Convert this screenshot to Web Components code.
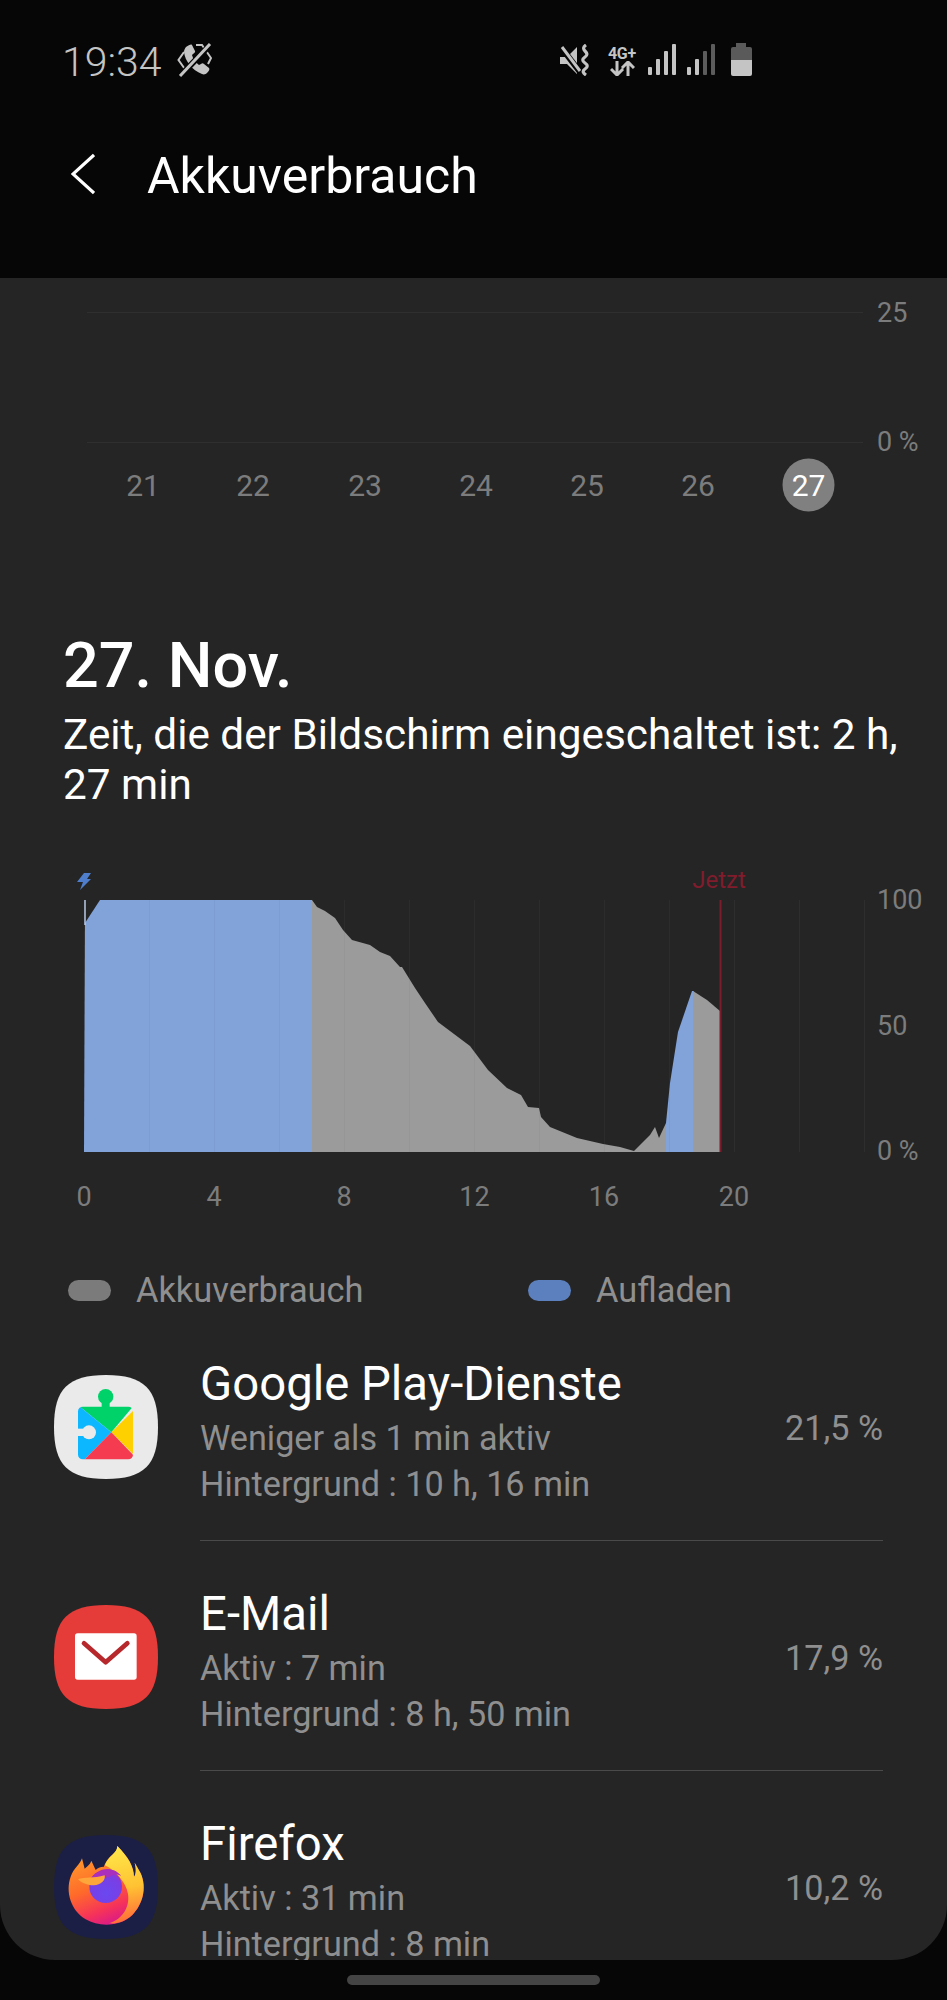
<!DOCTYPE html>
<html lang="de">
<head>
<meta charset="utf-8">
<title>Akkuverbrauch</title>
<style>
html,body{margin:0;padding:0;background:#060606;}
body{font-family:Roboto,"Liberation Sans",sans-serif;}
</style>
</head>
<body>
<battery-screen>
  <status-bar slot="top" time="19:34"></status-bar>
  <app-toolbar slot="top" label="Akkuverbrauch"></app-toolbar>
  <week-chart></week-chart>
  <day-summary heading="27. Nov.">Zeit, die der Bildschirm eingeschaltet ist: 2 h, 27&nbsp;min</day-summary>
  <day-chart></day-chart>
  <chart-legend></chart-legend>
  <app-row name="Google Play-Dienste" line1="Weniger als 1 min aktiv" line2="Hintergrund : 10 h, 16 min" pct="21,5 %"><play-icon></play-icon></app-row>
  <app-row name="E-Mail" line1="Aktiv : 7 min" line2="Hintergrund : 8 h, 50 min" pct="17,9 %"><mail-icon></mail-icon></app-row>
  <app-row name="Firefox" line1="Aktiv : 31 min" line2="Hintergrund : 8 min" pct="10,2 %"><firefox-icon></firefox-icon></app-row>
</battery-screen>
<script>
const SQ = 'M52 0C90 0 104 14 104 52S90 104 52 104 0 90 0 52 14 0 52 0Z';
function def(name, html, init){
  customElements.define(name, class extends HTMLElement{
    constructor(){super();this.attachShadow({mode:'open'});}
    connectedCallback(){
      this.shadowRoot.innerHTML = typeof html==='function'?html(this):html;
      if(init)init(this);
    }
  });
}
const a=(el,n)=>el.getAttribute(n)||'';

def('battery-screen',`<style>
:host{display:flex;flex-direction:column;width:947px;height:2000px;background:#060606;overflow:hidden;}
header{flex:0 0 278px;display:flex;flex-direction:column;}
main{flex:0 0 1682px;background:#252525;border-radius:0 0 55px 55px;overflow:hidden;display:flex;flex-direction:column;}
footer{flex:1;display:flex;justify-content:center;padding-top:15px;box-sizing:border-box;}
.bar{width:253px;height:10px;border-radius:5px;background:#444;}
</style>
<header><slot name="top"></slot></header>
<main><slot></slot></main>
<footer><div class="bar"></div></footer>`);

def('status-bar',el=>`<style>
:host{display:flex;align-items:flex-start;height:100px;box-sizing:border-box;padding:43px 195px 0 62px;color:#c4c4c4;}
.t{font:300 41px/34px Roboto,sans-serif;margin-top:2px;}
svg{display:block;flex:none;}
.phone{margin-left:15px;}
.right{display:flex;margin-left:auto;align-items:flex-start;}
.net{width:36px;margin-left:12px;display:flex;flex-direction:column;align-items:center;}
.g{font:700 16px/15px Roboto,sans-serif;margin-top:3px;letter-spacing:-.2px;}
.sig{margin-left:8px;margin-top:1px;}
.sig2{margin-left:11px;margin-top:1px;}
.bat{margin-left:16px;}
</style>
<span class="t">${a(el,'time')}</span>
<svg class="phone" width="36" height="34" viewBox="0 0 36 34" fill="none">
 <path d="M9 4c3-2 5-3 6-2l3 6c.5 1-.5 2-2 3l-1 1c1 4 3 7 7 10l2-1c1-1 2-1 3 0l5 4c1 1 0 3-2 5-1 1-3 2-5 1C15 27 8 18 7 9c0-2 1-4 2-5z" fill="#c4c4c4"/>
 <path d="M7 9 1.5 17 10 29M19 2l6 0 9 13-3 6" stroke="#c4c4c4" stroke-width="2"/>
 <path d="M34 1 3 33" stroke="#060606" stroke-width="6"/>
 <path d="M33 1 3 33" stroke="#c4c4c4" stroke-width="3"/>
</svg>
<div class="right">
 <svg width="32" height="32" viewBox="0 0 32 32" fill="none" style="margin-top:1px">
  <path d="M0 13h7L17 3v27L7 20H0z" fill="#c4c4c4"/>
  <path d="M1 3l19 25" stroke="#060606" stroke-width="6"/>
  <path d="M2 3l18 24" stroke="#c4c4c4" stroke-width="3"/>
  <path d="M26 1c-3 2-3 4-1 6s3 4 0 6-3 4 0 6 3 4 0 6-2 4 1 6" stroke="#c4c4c4" stroke-width="3.2"/>
 </svg>
 <div class="net"><span class="g">4G+</span>
  <svg width="25" height="15" viewBox="0 0 25 15" fill="none" stroke="#c4c4c4" stroke-width="3"><path d="M7 0v13M1 8l6 6 6-6M18 15V2M12 7l6-6 6 6"/></svg>
 </div>
 <svg class="sig" width="28" height="31" viewBox="0 0 28 31" fill="#c4c4c4"><rect x="0" y="23" width="4" height="8" rx="1"/><rect x="8" y="15" width="4" height="16" rx="1"/><rect x="16" y="7" width="4" height="24" rx="1"/><rect x="24" y="0" width="4" height="31" rx="1"/></svg>
 <svg class="sig2" width="28" height="31" viewBox="0 0 28 31"><rect x="0" y="23" width="4" height="8" rx="1" fill="#c4c4c4"/><rect x="8" y="15" width="4" height="16" rx="1" fill="#c4c4c4"/><rect x="16" y="7" width="4" height="24" rx="1" fill="#5c5c5c"/><rect x="24" y="0" width="4" height="31" rx="1" fill="#5c5c5c"/></svg>
 <svg class="bat" width="21" height="33" viewBox="0 0 21 33"><path d="M5 0h10v4h4a2 2 0 0 1 2 2v11H0V6a2 2 0 0 1 2-2h3z" fill="#5a5a5a"/><path d="M0 17h21v14a2 2 0 0 1-2 2H2a2 2 0 0 1-2-2z" fill="#c4c4c4"/></svg>
</div>`);

def('app-toolbar',el=>`<style>
:host{display:flex;align-items:center;height:75px;margin-top:36px;padding-left:71px;color:#fff;}
svg{flex:none;display:block;}
h1{margin:5px 0 0 52px;font:400 50px/75px Roboto,sans-serif;}
</style>
<svg width="24" height="42" viewBox="0 0 24 42" fill="none"><path d="M23 2 2 21l21 19" stroke="#fff" stroke-width="3.2"/></svg>
<h1>${a(el,'label')}</h1>`);

def('week-chart',()=>{
 const days=[[143,21],[253,22],[365,23],[476,24],[587,25],[698,26]];
 return `<style>:host{display:block;}svg{display:block;}text{font-family:Roboto,sans-serif;}</style>
<svg width="947" height="353" viewBox="0 278 947 353">
 <line x1="87" x2="863" y1="312.5" y2="312.5" stroke="#2f2f2f"/>
 <line x1="87" x2="863" y1="442.5" y2="442.5" stroke="#2f2f2f"/>
 <g fill="#7c7c7c" font-size="27">
  <text x="877" y="321.5">25</text><text x="877" y="451">0 %</text>
 </g>
 <g fill="#7c7c7c" font-size="30" text-anchor="middle">
  ${days.map(d=>`<text x="${d[0]}" y="496">${d[1]}</text>`).join('')}
 </g>
 <ellipse cx="808.5" cy="485" rx="26" ry="26.5" fill="#808080"/>
 <text x="808.5" y="496" font-size="30" fill="#fff" text-anchor="middle">27</text>
</svg>`;});

def('day-summary',el=>`<style>
:host{display:block;padding:0 30px 50px 63px;color:#fff;}
h2{margin:0;font:500 63px/70px Roboto,sans-serif;}
p{margin:9px 0 0;font:400 42.3px/50px Roboto,sans-serif;}
</style><h2>${a(el,'heading')}</h2><p><slot></slot></p>`);

def('day-chart',()=>{
 const grid=[];for(let x=84;x<=864;x+=65)grid.push(x);
 const gray1="312,900 317,907 325,911 335,918 343,930 352,940 370,945 380,952 390,956 400,967 402,967 415,988 425,1003 438,1022 470,1046 488,1070 507,1088 521,1095 528,1107 539,1108 541,1117 550,1127 577,1138 603,1144 620,1147 634,1151 650,1135 655,1127 659,1138 666,1123 666,1152 312,1152";
 const blue2="666,1123 670,1083 678,1032 692,991 693.5,991 693.5,1152 666,1152";
 const gray2="693,991 707,1000 720,1011 720,1152 693,1152";
 return `<style>:host{display:block;}svg{display:block;}text{font-family:Roboto,sans-serif;}</style>
<svg width="947" height="400" viewBox="0 860 947 400">
 <g stroke="#2e2e2e">${grid.map(x=>`<line x1="${x+.5}" x2="${x+.5}" y1="900" y2="1152"/>`).join('')}</g>
 <polygon points="85,923 100,900 312,900 312,1152 84,1152" fill="#82a3d9"/>
 <line x1="85" x2="85" y1="900" y2="925" stroke="#b8c8e6" stroke-width="1.5"/>
 <polygon points="${gray1}" fill="#9b9b9b"/>
 <polygon points="${blue2}" fill="#82a3d9"/>
 <polygon points="${gray2}" fill="#9b9b9b"/>
 <g stroke="#000" stroke-opacity=".03">${grid.slice(1,10).map(x=>`<line x1="${x+.5}" x2="${x+.5}" y1="900" y2="1152"/>`).join('')}</g>
 <line x1="720.5" x2="720.5" y1="900" y2="1152" stroke="#7d1c2c" stroke-width="2"/>
 <path d="M84 873 91 873 87 879 91 879 80 890 83 882 77 882z" fill="#4f7fcc"/>
 <text x="719" y="887.5" font-size="24" fill="#801c2c" text-anchor="middle">Jetzt</text>
 <g fill="#7c7c7c" font-size="27">
  <text x="877" y="909">100</text><text x="877" y="1035">50</text><text x="877" y="1160">0 %</text>
 </g>
 <g fill="#7c7c7c" font-size="27" text-anchor="middle">
  <text x="84" y="1206">0</text><text x="214" y="1206">4</text><text x="344" y="1206">8</text><text x="474.5" y="1206">12</text><text x="604" y="1206">16</text><text x="734" y="1206">20</text>
 </g>
</svg>`;});

def('legend-key',el=>`<style>
:host{display:flex;align-items:center;gap:25px;color:#8f8f8f;font:400 34.4px/42px Roboto,sans-serif;}
i{display:block;width:43px;height:21px;border-radius:10.5px;background:${a(el,'color')};}
</style><i></i><span><slot></slot></span>`);

def('chart-legend',`<style>
:host{display:grid;grid-template-columns:460px auto;justify-content:start;height:42px;margin-top:9px;padding-left:68px;}
</style>
<legend-key color="#7b7b7b">Akkuverbrauch</legend-key>
<legend-key color="#5c80bd">Aufladen</legend-key>`);

def('app-row',el=>`<style>
:host{display:flex;padding:0 64px 0 54px;height:230px;flex:none;box-sizing:border-box;}
.ic{flex:none;width:104px;height:104px;margin:64px 42px 0 0;}
.body{flex:1;display:flex;align-items:center;box-sizing:border-box;padding-top:42px;height:230px;border-bottom:1px solid #4a4a4a;}
:host(:last-of-type) .body{border:0;}
.txt{flex:1;align-self:flex-start;}
.n{font:400 47.3px/62px Roboto,sans-serif;color:#fff;}
.s{font:400 34.2px/46px Roboto,sans-serif;color:#8f8f8f;}
.p{font:400 34.2px/46px Roboto,sans-serif;color:#8f8f8f;align-self:flex-start;margin-top:52px;}
</style>
<div class="ic"><slot></slot></div>
<div class="body"><div class="txt"><div class="n">${a(el,'name')}</div><div class="s">${a(el,'line1')}</div><div class="s">${a(el,'line2')}</div></div><div class="p">${a(el,'pct')}</div></div>`);

const iconCss=`<style>:host{display:block;width:104px;height:104px;}svg{display:block;}</style>`;
def('play-icon',iconCss+`<svg width="104" height="104" viewBox="0 0 104 104">
 <path d="${SQ}" fill="#eaeaea"/>
 <g transform="scale(.3333) translate(-40 -45)">
  <defs><clipPath id="p"><rect x="112" y="140" width="165" height="158" rx="14"/></clipPath></defs>
  <circle cx="195" cy="110" r="23" fill="#00d26a"/><rect x="183" y="120" width="24" height="25" fill="#00d26a"/>
  <g clip-path="url(#p)">
   <polygon points="105,130 285,130 212,217" fill="#00d26a"/>
   <polygon points="105,130 212,217 125,305 105,305" fill="#0cb7ff"/>
   <polygon points="285,145 212,217 285,290" fill="#ffd000"/>
   <polygon points="125,305 212,217 290,298 290,305" fill="#f43b50"/>
  </g>
  <circle cx="145" cy="217" r="21" fill="#eaeaea"/><rect x="105" y="206" width="30" height="22" fill="#eaeaea"/>
 </g></svg>`);
def('mail-icon',iconCss+`<svg width="104" height="104" viewBox="0 0 104 104">
 <path d="${SQ}" fill="#e53c39"/>
 <g transform="scale(.3333) translate(-40 -45)">
  <rect x="103" y="130" width="185" height="139" rx="8" fill="#fff"/>
  <path d="M130 160 195 217 260 160" fill="none" stroke="#b7282c" stroke-width="14" stroke-linecap="round" stroke-linejoin="round"/>
 </g></svg>`);
def('firefox-icon',iconCss+`<svg width="104" height="104" viewBox="0 0 104 104">
 <defs>
  <linearGradient id="b" x1=".2" y1="0" x2=".6" y2="1"><stop offset="0" stop-color="#ffa52a"/><stop offset=".5" stop-color="#ff6a2a"/><stop offset=".8" stop-color="#f5325a"/><stop offset="1" stop-color="#d8188c"/></linearGradient>
  <linearGradient id="y" x1=".4" y1="0" x2=".5" y2="1"><stop offset="0" stop-color="#ffe84a"/><stop offset=".55" stop-color="#ffc232"/><stop offset="1" stop-color="#ff6a3a"/></linearGradient>
  <radialGradient id="v" cx=".5" cy=".7" r=".7"><stop offset="0" stop-color="#6a48f0"/><stop offset=".75" stop-color="#7a3ee4"/><stop offset="1" stop-color="#a72fc4"/></radialGradient>
 </defs>
 <path d="${SQ}" fill="#1c1f45"/>
 <g transform="scale(.3333) translate(-40 -45)">
  <path d="M124 115C118 135 100 142 90 170 74 215 90 270 135 298 175 322 240 320 275 285 305 255 320 205 300 160L282 128C288 150 285 165 280 170 280 140 262 110 230 78 232 95 215 100 200 120 192 132 190 140 190 140 178 140 170 145 165 150L152 122C148 135 136 142 132 146Z" fill="url(#b)"/>
  <path d="M230 78C262 110 280 140 280 170 285 165 288 150 282 128L300 160C320 205 305 255 275 285 250 308 225 312 205 310 245 298 268 262 262 222 256 185 222 150 193 136 200 110 230 100 230 78Z" fill="url(#y)"/>
  <circle cx="195" cy="200" r="49" fill="url(#v)"/>
  <path d="M150 176C165 150 210 130 242 168 225 160 212 164 206 172 190 172 170 172 150 176Z" fill="#a92fbc"/>
  <path d="M112 178C130 170 160 176 192 166 196 180 180 196 160 196 142 196 124 190 112 178Z" fill="#ffa63a"/>
 </g></svg>`);
</script>
</body>
</html>
